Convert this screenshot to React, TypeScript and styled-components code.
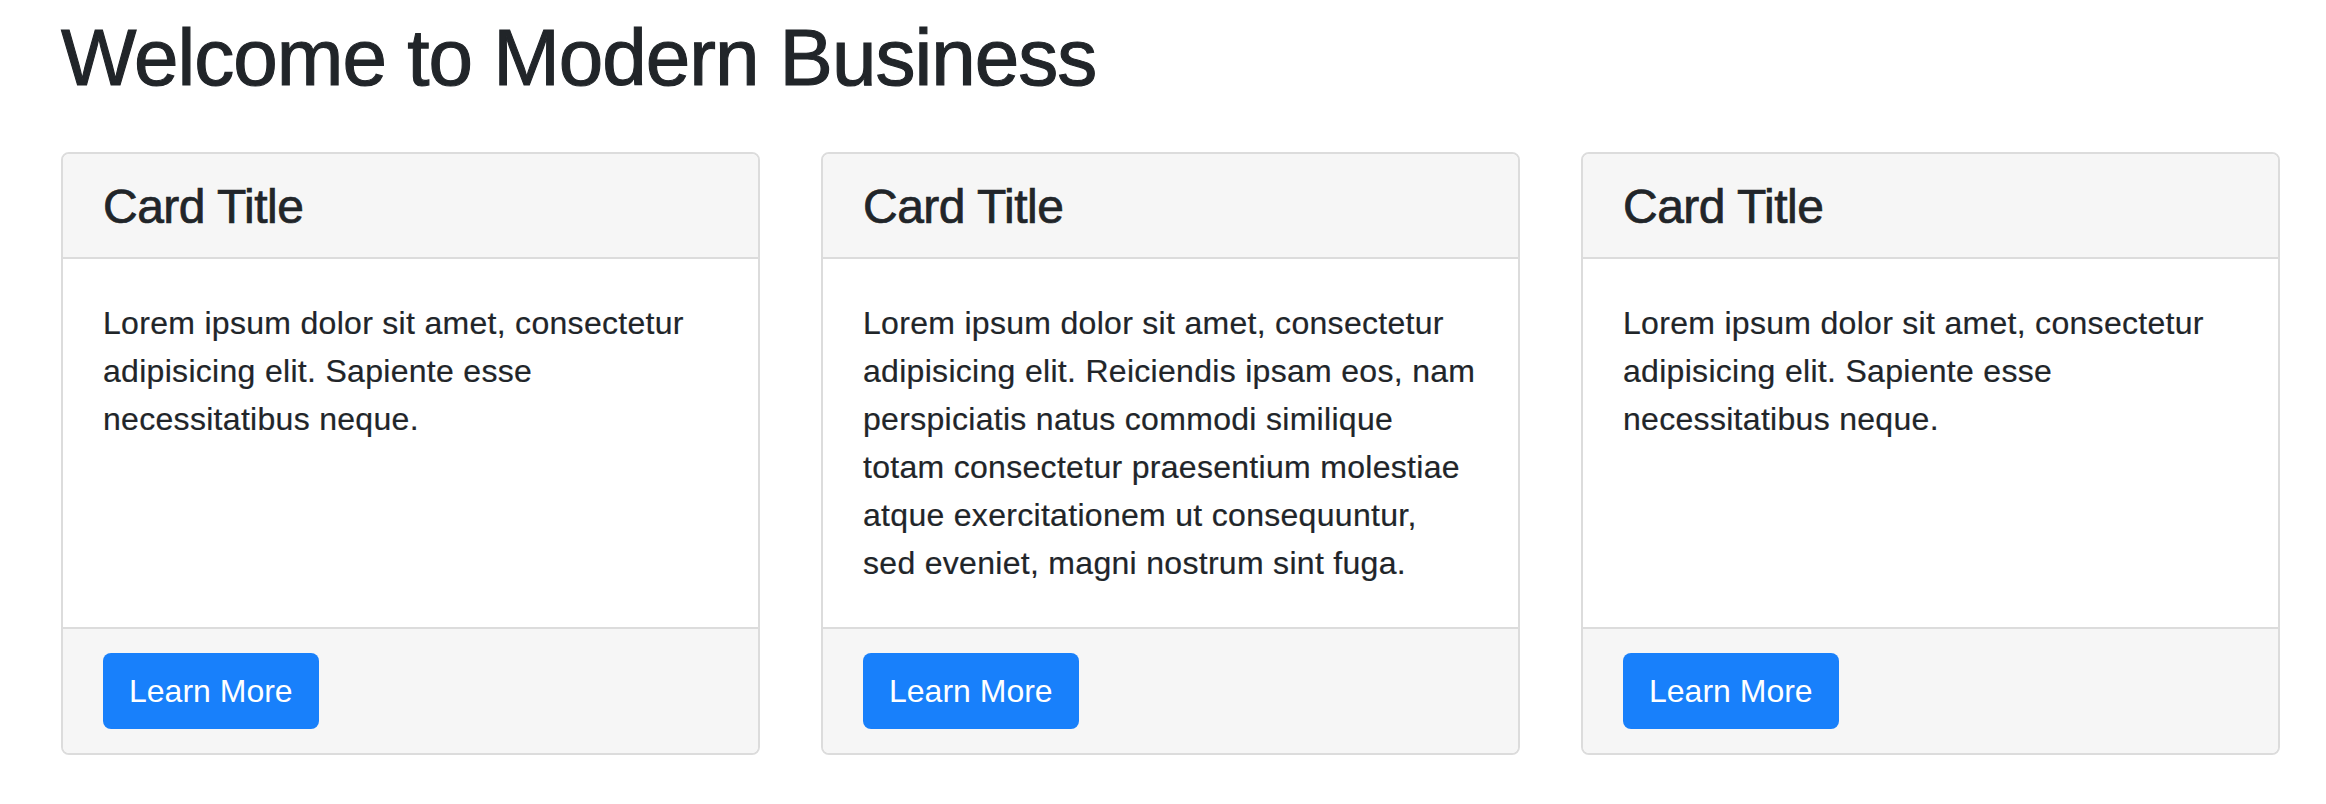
import React from "react";
import styled, { createGlobalStyle } from "styled-components";

const GlobalStyle = createGlobalStyle`
  html, body {
    margin: 0;
    padding: 0;
    background: #ffffff;
  }
  body {
    font-family: "Liberation Sans", Arial, sans-serif;
    color: #212529;
    -webkit-font-smoothing: antialiased;
  }
  * { box-sizing: border-box; }
`;

const Page = styled.main`
  padding: 10px 46px 0 61px;
`;

const Heading = styled.h1`
  margin: 0 0 46px 0;
  font-size: 80px;
  line-height: 96px;
  font-weight: 500;
  letter-spacing: -1px;
  color: #212529;
  -webkit-text-stroke: 1.1px #212529;
`;

const CardRow = styled.div`
  display: grid;
  grid-template-columns: repeat(3, 1fr);
  column-gap: 61px;
  align-items: stretch;
`;

const Card = styled.section`
  display: flex;
  flex-direction: column;
  border: 2px solid #dcdcdc;
  border-radius: 8px;
  background: #ffffff;
  overflow: hidden;
`;

const CardHeader = styled.header`
  background: #f6f6f6;
  border-bottom: 2px solid #dcdcdc;
  padding: 25px 40px 23px;
`;

const CardTitle = styled.h4`
  margin: 0;
  font-size: 48px;
  line-height: 55px;
  font-weight: 500;
  letter-spacing: -0.5px;
  color: #212529;
  -webkit-text-stroke: 0.7px #212529;
`;

const CardBody = styled.div`
  flex: 1 1 auto;
  padding: 40px;
`;

const CardText = styled.p`
  margin: 0;
  font-size: 32px;
  line-height: 48px;
  letter-spacing: 0.3px;
  white-space: pre;
  color: #212529;
  -webkit-text-stroke: 0.2px #212529;
`;

const CardFooter = styled.footer`
  background: #f6f6f6;
  border-top: 2px solid #dcdcdc;
  padding: 24px 40px;
`;

const Button = styled.a`
  display: inline-block;
  padding: 12px 24px;
  border: 2px solid transparent;
  border-radius: 8px;
  background: #1880fb;
  color: #ffffff;
  font-size: 32px;
  line-height: 48px;
  text-decoration: none;
  cursor: pointer;
`;

type CardData = { title: string; lines: string[] };

const cards: CardData[] = [
  {
    title: "Card Title",
    lines: [
      "Lorem ipsum dolor sit amet, consectetur",
      "adipisicing elit. Sapiente esse",
      "necessitatibus neque.",
    ],
  },
  {
    title: "Card Title",
    lines: [
      "Lorem ipsum dolor sit amet, consectetur",
      "adipisicing elit. Reiciendis ipsam eos, nam",
      "perspiciatis natus commodi similique",
      "totam consectetur praesentium molestiae",
      "atque exercitationem ut consequuntur,",
      "sed eveniet, magni nostrum sint fuga.",
    ],
  },
  {
    title: "Card Title",
    lines: [
      "Lorem ipsum dolor sit amet, consectetur",
      "adipisicing elit. Sapiente esse",
      "necessitatibus neque.",
    ],
  },
];

export default function App() {
  return (
    <>
      <GlobalStyle />
      <Page>
        <Heading>Welcome to Modern Business</Heading>
        <CardRow>
          {cards.map((c, i) => (
            <Card key={i}>
              <CardHeader>
                <CardTitle>{c.title}</CardTitle>
              </CardHeader>
              <CardBody>
                <CardText>{c.lines.join("\n")}</CardText>
              </CardBody>
              <CardFooter>
                <Button href="#">Learn More</Button>
              </CardFooter>
            </Card>
          ))}
        </CardRow>
      </Page>
    </>
  );
}
